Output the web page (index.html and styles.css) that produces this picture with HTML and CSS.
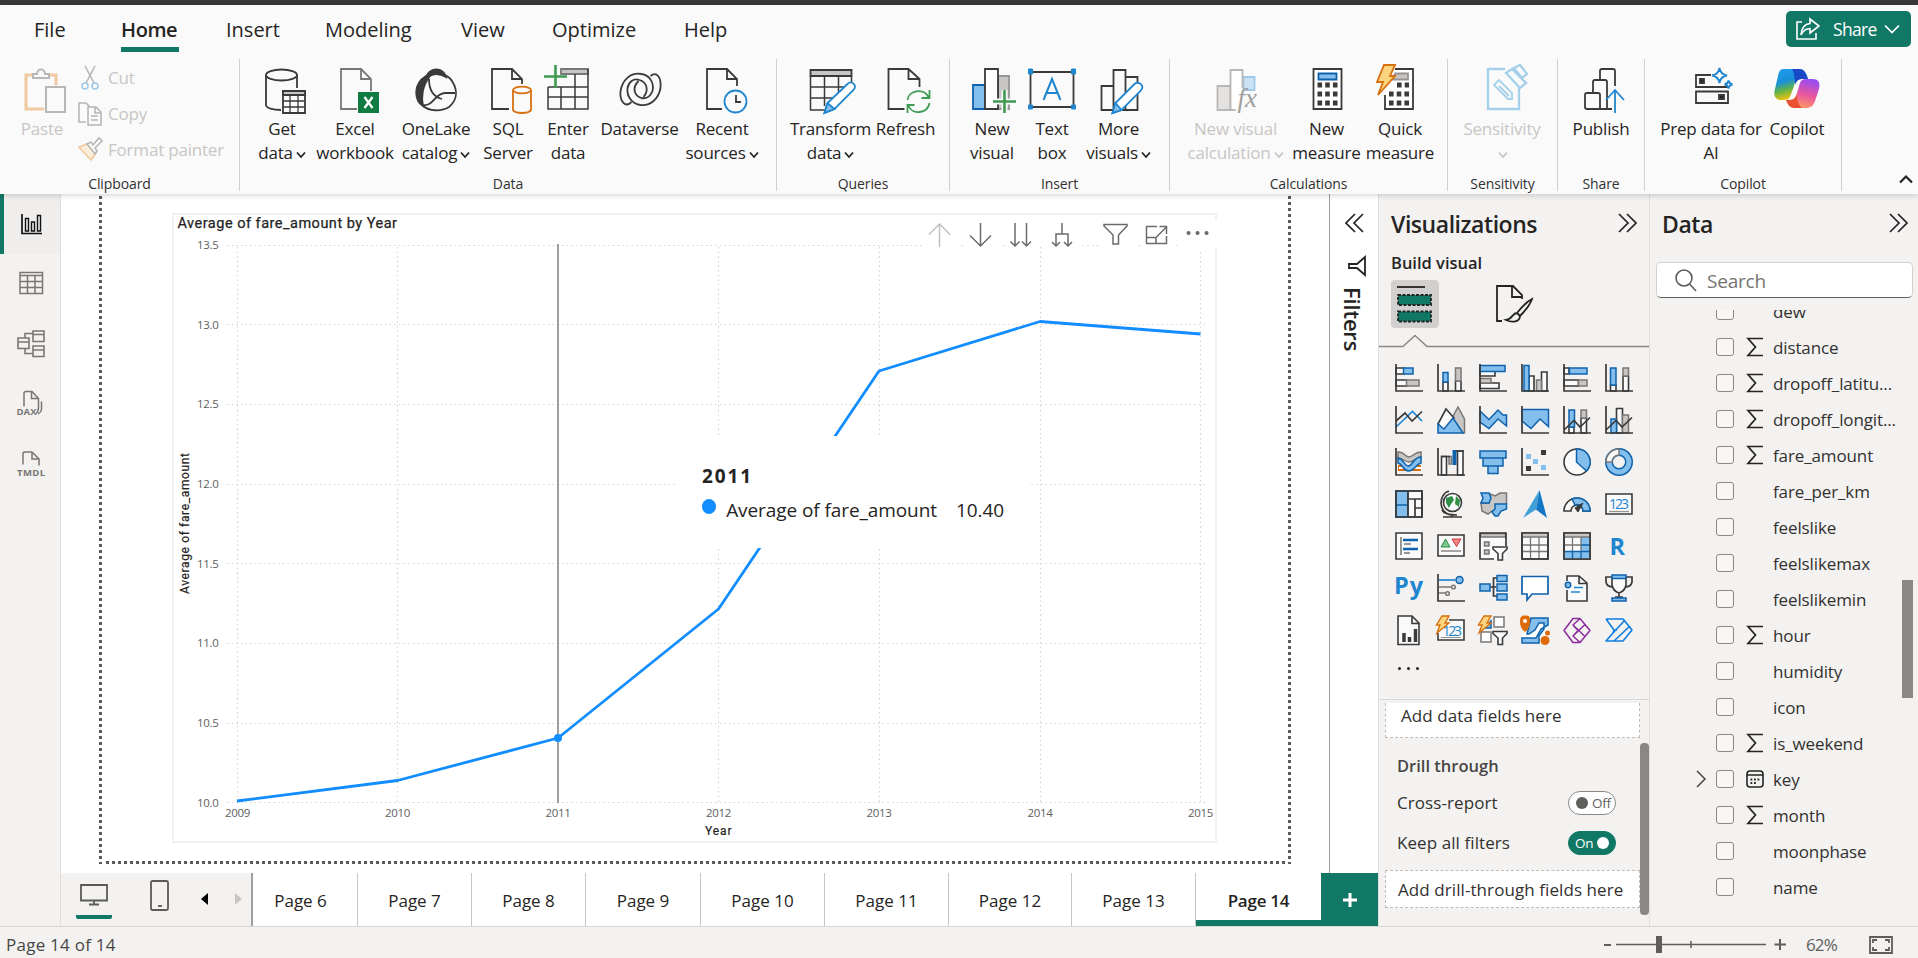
FILE: index.html
```html
<!DOCTYPE html>
<html lang="en">
<head>
<meta charset="utf-8">
<title>Report editor</title>
<link rel="stylesheet" href="styles.css">
</head>
<body>
<svg class="defs" aria-hidden="true">
  <symbol id="chev" viewBox="0 0 10 8"><path d="M1 1.500L5 6L9 1.500" fill="none" stroke="currentColor" stroke-width="1.800"/></symbol>
  <symbol id="dbl" viewBox="0 0 19 20"><path d="M1 1L10 10L1 19M9 1L18 10L9 19" fill="none" stroke="#252423" stroke-width="1.700"/></symbol>
  <symbol id="sum" viewBox="0 0 18 20"><path d="M17 1.500H2L9.500 10L2 18.500H17" fill="none" stroke="#252423" stroke-width="1.700"/></symbol>
  <linearGradient id="cpA" x1="0" y1="0" x2="0.300" y2="1"><stop offset="0" stop-color="#1f9df0"/><stop offset=".45" stop-color="#1a8fd8"/><stop offset=".7" stop-color="#5fb34a"/><stop offset="1" stop-color="#f4c20d"/></linearGradient>
  <linearGradient id="cpB" x1="0.600" y1="0" x2="0.300" y2="1"><stop offset="0" stop-color="#9a4df0"/><stop offset=".5" stop-color="#e8569d"/><stop offset="1" stop-color="#ffa25c"/></linearGradient>
</svg>

<div class="titlebar"></div>
<header class="ribbon">
  <nav class="menu">
    <span class="m-file">File</span><span class="m-home active">Home</span><span class="m-insert">Insert</span><span class="m-model">Modeling</span><span class="m-view">View</span><span class="m-opt">Optimize</span><span class="m-help">Help</span>
    <button class="share"><svg width="24" height="24" viewBox="0 0 24 24" fill="none" stroke="#fff" stroke-width="1.600"><path d="M6 5H1V22H20V16M14 6.500V2L23 9L14 16V11.500C9 11.500 7 14 5 18C5.500 11 8 7 14 6.500Z"/></svg><b>Share</b><svg width="16" height="10" viewBox="0 0 16 10" fill="none" stroke="#fff" stroke-width="1.700"><path d="M1 1.500L8 8.500L15 1.500"/></svg></button>
  </nav>
  <div class="groups">
    <section class="group g-clip off">
      <div class="tools">
        <div class="btn paste"><svg width="56" height="50" viewBox="14 64 56 50" fill="none" stroke-width="2"><path d="M32 75H26V109H44M50 75H56V85" stroke="#f0c9a0" stroke-width="3"/><path d="M33 78V74H37C37 68 45 68 45 74H49V78Z" stroke="#b9b7b5"/><path d="M46 87H65V112H46Z" stroke="#b9b7b5" fill="#fafafa"/></svg><span>Paste</span></div>
        <div class="mini">
          <span><svg width="24" height="26" viewBox="78 65 24 26" fill="none" stroke-width="1.600"><path d="M85 66L94 83M95 66L86 83" stroke="#b9b7b5"/><circle cx="85" cy="86" r="3" stroke="#9fc9e8"/><circle cx="95" cy="86" r="3" stroke="#9fc9e8"/></svg>Cut</span>
          <span><svg width="24" height="26" viewBox="78 100 24 26" fill="none" stroke="#b9b7b5" stroke-width="1.600"><path d="M86 121H79V102H86L90 106"/><path d="M88 106H96L101 111V124H88ZM95 106V112H101M91 115H98M91 119H98"/></svg>Copy</span>
          <span><svg width="24" height="26" viewBox="78 136 24 26" fill="none" stroke-width="1.600"><path d="M79 146L87 143L96 152L91 159Z" stroke="#f0c9a0" fill="#fdeed8"/><path d="M87 143L91 141L93 144L99 137L102 140L95 147L97 150L95 153Z" stroke="#b9b7b5" fill="#fafafa"/></svg>Format painter</span>
        </div>
      </div>
      <h4>Clipboard</h4>
    </section>
    <section class="group g-data">
      <div class="tools">
        <div class="btn w66"><svg width="56" height="50" viewBox="254 64 56 50" class="ic"><path d="M266 75V105C266 108 273 110 281 110M297 75V88"/><ellipse cx="281.500" cy="75" rx="15.500" ry="5.500"/><path d="M283 91H305V113H283Z" fill="#fff"/><path d="M283 91H305V95H283Z" fill="#c8c6c4"/><path d="M290 95V113M298 95V113M283 101H305M283 107H305" stroke-width="1.300"/></svg><span>Get<br>data<svg class="cv"><use href="#chev"/></svg></span></div>
        <div class="btn w80"><svg width="56" height="50" viewBox="327 64 56 50" class="ic"><path d="M357 109H341V69H361L371 79V91M361 69V79H371" stroke="#797775"/><path d="M358 92H379V113H358Z" fill="#107c41" stroke="none"/><path d="M364.500 97L372.500 108M372.500 97L364.500 108" stroke="#fff" stroke-width="2.300"/></svg><span>Excel<br>workbook</span></div>
        <div class="btn w82"><svg width="56" height="50" viewBox="409 64 56 50" class="ic"><path d="M427 77C430 67 445 67 447 77C441 73 433 73 427 77Z" fill="#3b3a39"/><path d="M427 76C414 84 415 100 424 106C422 98 423 86 431 76Z" fill="#3b3a39"/><path d="M428 78C436 71 448 73 453 81C460 92 457 101 450 107C442 112 430 111 424 106M430 79C430 90 435 97 443 99M424 105C434 107 436 93 446 93H456"/></svg><span>OneLake<br>catalog<svg class="cv"><use href="#chev"/></svg></span></div>
        <div class="btn w62"><svg width="56" height="50" viewBox="480 64 56 50" class="ic"><path d="M509 109H492V69H512L522 79V84M512 69V79H522"/><path d="M513 90V110C515 114 529 114 531 110V90" stroke="#d8700f"/><ellipse cx="522" cy="90" rx="9" ry="3.300" stroke="#d8700f"/></svg><span>SQL<br>Server</span></div>
        <div class="btn w58"><svg width="56" height="50" viewBox="540 64 56 50" class="ic"><path d="M561 69H588V74H561Z" fill="#c8c6c4" stroke="#797775"/><path d="M548 87V109H588V69M548 97H588M575 74V109M561 87V109M570 87H588M548 87H575" stroke-width="1.500"/><path d="M555.500 65V88M544 76.500H567" stroke="#3f9b54" stroke-width="2.600"/></svg><span>Enter<br>data</span></div>
        <div class="btn w85"><svg width="56" height="50" viewBox="611.500 64 56 50" class="ic"><path d="M650 76C656 71 661 77 660 88C658 99 650 106 640 105C632 104 626 97 627 88C628 82 633 78 639 80C646 82 649 90 643 97"/><path d="M631 102C625 108 619 102 620 91C622 80 630 72 641 74C649 75 654 83 652 91C650 96 646 99 641 98C634 96 631 88 638 81"/></svg><span>Dataverse</span></div>
        <div class="btn w80"><svg width="56" height="50" viewBox="694 64 56 50" class="ic"><path d="M722 109H707V69H727L737 79V86M727 69V79H737"/><circle cx="735.500" cy="101.500" r="11" stroke="#1f86cf" fill="#fafafa"/><path d="M736 95V102H741"/></svg><span>Recent<br>sources<svg class="cv"><use href="#chev"/></svg></span></div>
      </div>
      <h4>Data</h4>
    </section>
    <section class="group g-quer">
      <div class="tools">
        <div class="btn w87"><svg width="56" height="50" viewBox="802.500 64 56 50" class="ic"><path d="M810 70H851V76H810Z" fill="#c8c6c4"/><path d="M851 76V84M810 76V110H825M824 76V106M838 76V95M810 87H845M810 98H833" stroke-width="1.500"/><path d="M824 113L827 103L847 84C851 80 857 85 853 90L834 109Z" fill="#fff" stroke="#1f86cf"/><path d="M824 113L827 103L834 109Z" fill="#83beec" stroke="#1f86cf"/></svg><span>Transform<br>data<svg class="cv"><use href="#chev"/></svg></span></div>
        <div class="btn w63"><svg width="56" height="50" viewBox="877.500 64 56 50" class="ic"><path d="M904 109H888V69H908L919 79V87M908 69V79H919"/><path d="M907 100C908 90 923 88 928 97M929 90V98H921M929 103C927 114 912 115 908 106M907 113V105H914" stroke="#3f9b54"/></svg><span>Refresh</span></div>
      </div>
      <h4>Queries</h4>
    </section>
    <section class="group g-ins">
      <div class="tools">
        <div class="btn w60"><svg width="56" height="50" viewBox="964 64 56 50" class="ic"><path d="M973 85H985V109H973Z" fill="#83beec" stroke="#0f62ac"/><path d="M998 76H1009V109H998Z" fill="#c8c6c4" stroke="#979593"/><path d="M985 69H998V109H985Z" fill="#fff"/><path d="M1004.500 90V113M993 101.500H1016" stroke="#fafafa" stroke-width="6"/><path d="M1004.500 90V113M993 101.500H1016" stroke="#3f9b54" stroke-width="2.600"/></svg><span>New<br>visual</span></div>
        <div class="btn w60"><svg width="56" height="50" viewBox="1024.500 64 56 50" class="ic"><path d="M1031 72H1074V107H1031Z"/><path d="M1029 69H1033V74H1029ZM1072 69H1076V74H1072ZM1029 105H1033V109H1029ZM1072 105H1076V109H1072Z" fill="#1f86cf" stroke="#1f86cf" stroke-width="1"/><path d="M1044 100L1052.500 79L1061 100M1047 93H1058" stroke="#1f86cf" stroke-width="2"/></svg><span>Text<br>box</span></div>
        <div class="btn w73"><svg width="56" height="50" viewBox="1090.500 64 56 50" class="ic"><path d="M1101 86H1113V110H1101ZM1113 70H1125V110H1113ZM1125 77H1137V110H1125Z"/><path d="M1112 113L1115 103L1134 84C1138 81 1145 85 1140 91L1121 110Z" fill="#fff" stroke="#1f86cf"/><path d="M1112 113L1115 103L1121 110Z" fill="#83beec" stroke="#1f86cf"/></svg><span>More<br>visuals<svg class="cv"><use href="#chev"/></svg></span></div>
      </div>
      <h4>Insert</h4>
    </section>
    <section class="group g-calc">
      <div class="tools">
        <div class="btn w107 off"><svg width="56" height="50" viewBox="1206.500 64 56 50" class="ic"><path d="M1216 86H1229V110H1216Z" fill="#e3e2e1" stroke="#b9b7b5"/><path d="M1242 77H1253V90H1242Z" fill="#cbe3f5" stroke="#9fc9e8"/><path d="M1241 88V70H1229V110H1234" fill="#fff" stroke="#b9b7b5"/><text x="1236" y="107" class="fx">fx</text></svg><span>New visual<br>calculation<svg class="cv"><use href="#chev"/></svg></span></div>
        <div class="btn w75"><svg width="56" height="50" viewBox="1297.500 64 56 50" class="ic"><path d="M1312 69H1340V109H1312Z" fill="#fff"/><path d="M1317 73.500H1335V79.500H1317Z" fill="#83beec" stroke="#0f62ac"/><path d="M1316 85H1336M1316 94H1336M1316 103H1336" stroke-width="5" stroke-dasharray="4.600 3.100"/></svg><span>New<br>measure</span></div>
        <div class="btn w72"><svg width="56" height="50" viewBox="1371 64 56 50" class="ic"><path d="M1384 95V109H1412V69H1394" fill="#fff"/><path d="M1394 73.500H1407V79.500H1392Z" fill="#c8c6c4" stroke="#979593"/><path d="M1396 85H1408M1388 94H1408M1388 103H1408" stroke-width="5" stroke-dasharray="4.600 3.100"/><path d="M1383 65H1394L1389 76H1394L1377 95L1382 82H1376Z" fill="#fbd47f" stroke="#d8700f"/></svg><span>Quick<br>measure</span></div>
      </div>
      <h4>Calculations</h4>
    </section>
    <section class="group g-sens off">
      <div class="tools">
        <div class="btn w108"><svg width="56" height="50" viewBox="1473 64 56 50" class="ic ls"><path d="M1504 69H1487V109H1518V88" stroke-width="2.300"/><path d="M1493 85L1498 80L1511 93L1511 99H1507ZM1498 86L1508 96" /><path d="M1505 73L1511 69L1525 83L1519 88ZM1513 68L1519 65L1526 74L1521 78Z" stroke-width="2.300"/></svg><span>Sensitivity<br><svg class="cv"><use href="#chev"/></svg></span></div>
      </div>
      <h4>Sensitivity</h4>
    </section>
    <section class="group g-share">
      <div class="tools">
        <div class="btn w87"><svg width="56" height="50" viewBox="1573 64 56 50" class="ic"><path d="M1612 109H1587Q1585 109 1585 107V95Q1585 93 1587 93H1598Q1600 93 1600 95V109M1593 92V82Q1593 80 1595 80H1605Q1607 80 1607 82V109M1600 79V71Q1600 69 1602 69H1613Q1615 69 1615 71V86"/><path d="M1615 113V90M1606 100L1615 90L1624 100" stroke="#1f86cf"/></svg><span>Publish</span></div>
      </div>
      <h4>Share</h4>
    </section>
    <section class="group g-cop">
      <div class="tools">
        <div class="btn w108"><svg width="56" height="50" viewBox="1683 64 56 50" class="ic"><path d="M1711 75H1696V87H1728M1696 91.500H1728V103H1696Z"/><path d="M1700 79H1704V83H1700ZM1719 95H1724V99H1719Z" fill="#252423"/><path d="M1719.500 68Q1720.500 74.500 1727 75.500Q1720.500 76.500 1719.500 83Q1718.500 76.500 1712 75.500Q1718.500 74.500 1719.500 68ZM1728.500 80.500Q1729 84 1732.500 84.500Q1729 85 1728.500 88.500Q1728 85 1724.500 84.500Q1728 84 1728.500 80.500Z" fill="#fafafa" stroke="#1f86cf"/></svg><span>Prep data for<br>AI</span></div>
        <div class="btn w64"><svg width="56" height="50" viewBox="1769 64 56 50"><path d="M1783 69H1799C1804 69 1806 72 1808 79H1800C1796 79 1795 82 1794 86L1790 97C1789 99 1787 100 1784 100H1781C1775 100 1773 95 1775 89L1778 76C1779 72 1780 69 1783 69Z" fill="url(#cpA)"/><path d="M1799 69C1804 69 1806 73 1808 79H1802C1798 79 1796 82 1795 85C1795 77 1794 72 1792 69Z" fill="#1847c7"/><path d="M1812 79C1820 79 1820 84 1819 89L1815 101C1813 106 1811 108 1806 108H1795C1789 108 1788 104 1786 100H1790C1794 100 1796 97 1797 93L1800 83C1801 80 1803 79 1806 79Z" fill="url(#cpB)"/><path d="M1795 108C1789 108 1788 104 1786 100H1790C1794 100 1796 97 1797 94C1797 101 1799 106 1802 108Z" fill="#e9512f"/></svg><span>Copilot</span></div>
      </div>
      <h4>Copilot</h4>
    </section>
    <svg class="fold" width="14" height="9" viewBox="0 0 14 9"><path d="M1 7.500L7 1.500L13 7.500" fill="none" stroke="#252423" stroke-width="2.200"/></svg>
  </div>
</header>

<main>
  <aside class="rail">
    <div class="on"><svg width="30" height="30" viewBox="15 208 30 30" fill="none" stroke="#111" stroke-width="1.700"><path d="M21 213V232.500H41"/><path d="M24.500 217.500H27.500V230H24.500ZM30.500 221H33.500V230H30.500ZM36.500 214.500H39.500V230H36.500Z" stroke-width="1.400"/></svg></div>
    <div><svg width="30" height="30" viewBox="16 268 30 30" fill="none" stroke="#797775" stroke-width="1.500"><path d="M20 271.500H42.500V292.500H20ZM20 274.500H42.500M20 280.500H42.500M20 286.500H42.500M27.500 274.500V292.500M35 274.500V292.500"/></svg></div>
    <div><svg width="30" height="30" viewBox="16 328.500 30 30" fill="none" stroke="#797775" stroke-width="1.600"><path d="M33 330.500H44V341H33ZM33 334H44M33 345.500H44V356H33ZM33 349.500H44M18 337.500H29V348H18ZM18 341.500H29M25 337V333H33M25 348V353H33"/></svg></div>
    <div><svg width="32" height="30" viewBox="14 388.500 32 30" fill="none" stroke="#797775" stroke-width="1.500"><path d="M23 406V393Q23 391 25 391H31L37.500 398V407Q37.500 411 35 413M30.500 391V398H37M40.500 401V409Q40 412 37 413.500"/><text x="15.500" y="414.500" textLength="20" class="tiny">DAX</text></svg></div>
    <div><svg width="32" height="30" viewBox="15 448.500 32 30" fill="none" stroke="#797775" stroke-width="1.500"><path d="M23 464V453Q23 451.500 25 451.500H32L39 458.500V465M32 451.500V458.500H39"/><text x="17" y="475" textLength="28" class="tiny">TMDL</text></svg></div>
  </aside>

  <section class="work">
    <div class="canvas">
      <svg width="1268" height="679" viewBox="61 194 1268 679" class="chart">
        <path d="M100.500 196V864M1289.500 196V864" stroke="#5b5a58" stroke-width="3" stroke-dasharray="3 3" fill="none"/>
        <path d="M106 862.500H1288" stroke="#5b5a58" stroke-width="3" stroke-dasharray="3 3" fill="none"/>
        <rect x="173" y="214" width="1043" height="628" fill="#fff" stroke="#f3f2f1" stroke-width="2"/>
        <text x="177.500" y="228" textLength="219.500" class="ttl">Average of fare_amount by Year</text>
        <g class="grid">
          <path d="M227 245.500H1206M227 324.500H1206M227 404.500H1206M227 484.500H1206M227 563.500H1206M227 643.500H1206M227 723.500H1206M227 802.500H1206"/>
          <path d="M237.500 247V802M397.500 247V802M718.500 247V802M879.500 247V802M1040.500 247V802M1200.500 252V802"/>
        </g>
        <path d="M558 244V803" stroke="#808080" stroke-width="1.500"/>
        <g class="ax" text-anchor="end">
          <text x="218.500" y="249">13.5</text><text x="218.500" y="328.500">13.0</text><text x="218.500" y="408">12.5</text><text x="218.500" y="488">12.0</text><text x="218.500" y="567.500">11.5</text><text x="218.500" y="647">11.0</text><text x="218.500" y="727">10.5</text><text x="218.500" y="807">10.0</text>
        </g>
        <g class="ax" text-anchor="middle">
          <text x="237.500" y="817">2009</text><text x="397.500" y="817">2010</text><text x="558" y="817">2011</text><text x="718.500" y="817">2012</text><text x="879" y="817">2013</text><text x="1040" y="817">2014</text><text x="1200.500" y="817">2015</text>
        </g>
        <text x="705" y="835" textLength="26.500" class="axt">Year</text>
        <text transform="translate(189 594) rotate(-90)" textLength="141" class="axt">Average of fare_amount</text>
        <path d="M237 801L397.500 780.500L558 738L718.500 609L879 371L1040 321.500L1200.500 334" fill="none" stroke="#118dff" stroke-width="2.800" stroke-linejoin="round"/>
        <circle cx="558" cy="738" r="4" fill="#118dff"/>
        <path d="M923 221H960V248H923ZM965 221H1002V248H965ZM1005 221H1042V247H1005ZM1045 221H1083V248H1045ZM1099 221H1136V248H1099ZM1140 221H1176V248H1140ZM1180 221H1217V249H1180Z" fill="#fff"/>
        <g fill="none" stroke="#6d6b69" stroke-width="1.500">
          <path d="M939.500 247V224M929 234.500L939.500 224L950 234.500" stroke="#c3c1bf"/>
          <path d="M980.500 223V246M970 235.500L980.500 246L991 235.500"/>
          <path d="M1015 223V246M1010.500 241.500L1015 246L1019.500 241.500M1026.500 223V246M1022 241.500L1026.500 246L1031 241.500"/>
          <path d="M1062 223V234M1056 246V234H1068V246M1052 242L1056 246L1060 242M1064 242L1068 246L1072 242"/>
          <path d="M1104 224.500H1127V226L1118.500 235V244H1113V235L1104 226Z"/>
          <path d="M1157 226.500H1146.500V243.500H1166.500V236M1146.500 237.500H1156V243.500M1156.500 237L1166 227.500M1159.500 226.500H1166.500V234"/>
          <path d="M1188.500 233H1188.600M1197.500 233H1197.600M1206.500 233H1206.600" stroke-width="4" stroke-linecap="round"/>
        </g>
      </svg>
      <div class="tip"><b>2011</b><p><i></i><span>Average of fare_amount</span><span>10.40</span></p></div>
    </div>
    <div class="pages">
      <div class="modes">
        <span class="desk"><svg width="28" height="22" viewBox="0 0 28 22" fill="none" stroke="#5b5a58" stroke-width="1.800"><path d="M1 1H27V16.500H1ZM14 16.500V20M9 20.500H19"/></svg></span>
        <svg class="ph" width="19" height="31" viewBox="0 0 19 31" fill="none" stroke="#5b5a58" stroke-width="1.800"><rect x="1" y="1" width="17" height="29" rx="1.500"/><path d="M8 26H12"/></svg>
        <svg class="al" width="7" height="12" viewBox="0 0 7 12"><path d="M7 0V12L0 6Z" fill="#000"/></svg>
        <svg class="ar" width="7" height="12" viewBox="0 0 7 12"><path d="M0 0V12L7 6Z" fill="#c8c6c4"/></svg>
      </div>
      <span class="pg first">Page 6</span><span class="pg w114">Page 7</span><span class="pg w114">Page 8</span><span class="pg w115">Page 9</span><span class="pg w124">Page 10</span><span class="pg w124">Page 11</span><span class="pg w123">Page 12</span><span class="pg w124">Page 13</span><span class="pg cur">Page 14</span>
      <span class="add"><svg width="14" height="14" viewBox="0 0 14 14"><path d="M7 0V14M0 7H14" stroke="#fff" stroke-width="3"/></svg></span>
    </div>
  </section>

  <aside class="filters">
    <svg class="flip" width="19" height="20"><use href="#dbl"/></svg>
    <svg class="fun" width="18" height="20" viewBox="0 0 18 20" fill="none" stroke="#252423" stroke-width="1.800"><path d="M17 1V19L9 12H1V8H9Z"/></svg>
    <span>Filters</span>
  </aside>

  <aside class="vis">
    <div class="phead"><h2>Visualizations</h2><svg width="19" height="20"><use href="#dbl"/></svg></div>
    <h3>Build visual</h3>
    <div class="modesel">
      <span class="sel"><svg width="36" height="37" viewBox="0 0 36 37"><path d="M0 1H28" stroke="#252423" stroke-width="1.800"/><path d="M1 9H34V19H1ZM1 25.500H34V35.500H1Z" fill="#117865" stroke="#252423" stroke-width="1.800" stroke-dasharray="3 1.500"/></svg></span>
      <svg width="38" height="38" viewBox="0 0 38 38" fill="none" stroke="#252423" stroke-width="1.800"><path d="M6 36H1V1H17L26 10V14M16 1V12H26"/><path d="M36 14C30 17 25 23 21 28L24 31C29 26 34 20 36 14ZM21 28C16 28 17 34 10 35C16 38 24 37 24 31Z"/></svg>
    </div>
    <svg class="notch" width="270" height="14" viewBox="0 0 270 14"><path d="M0 12.500H24L36 1.500L48 12.500H270" fill="none" stroke="#8a8886" stroke-width="1.500"/></svg>
    <div class="icons">
      <svg><path class="w" d="M1 4H9V10H1ZM1 16H12V22H1Z"/><path class="b" d="M8.500 4H18V10H8.500Z"/><path class="g" d="M11.500 16H24V22H11.500Z"/><path class="k" d="M1 0V27H28"/></svg>
      <svg><path class="w" d="M6 18H11V27H6ZM18.500 17H24V27H18.500Z"/><path class="b" d="M6 8.500H11V18H6Z"/><path class="g" d="M18.500 4H24V17H18.500Z"/><path class="k" d="M1 0V27H28"/></svg>
      <svg><path class="w" d="M1 7H16V12H1ZM1 19H20V24.500H1Z"/><path class="b" d="M1 1.500H26V7.500H1Z"/><path class="g" d="M1 14.500H12V19H1Z"/><path class="k" d="M1 0V27H28"/></svg>
      <svg><path class="w" d="M8 12H13V27H8ZM20.500 8H26V27H20.500Z"/><path class="b" d="M3 1.500H8V27H3Z"/><path class="g" d="M15.500 16H20.500V27H15.500Z"/><path class="k" d="M1 0V27H28"/></svg>
      <svg><path class="w" d="M1 4H6V10H1ZM1 16H15.500V22H1Z"/><path class="b" d="M6.500 4H24V10H6.500Z"/><path class="g" d="M15.500 16H24V22H15.500Z"/><path class="k" d="M1 0V27H28"/></svg>
      <svg><path class="w" d="M5.500 21H11V27H5.500ZM18 12H23.500V27H18Z"/><path class="b" d="M5.500 4H11V21H5.500Z"/><path class="g" d="M18 4H23.500V12H18Z"/><path class="k" d="M1 0V27H28"/></svg>

      <svg><path class="bl" d="M1 21L17.500 5.500L27 15"/><path class="k" d="M1 15L10 7L17 15L27 5.500"/><path class="k" d="M1 0V27H28"/></svg>
      <svg><path class="g" d="M21 1L14 14L26 27H27.500V13Z"/><path class="w" d="M1 18L9 3L17 12L7 25L1 18Z"/><path class="b" d="M1 18L7 23L16 12L26 27H1Z"/></svg>
      <svg><path class="b" d="M1 5L10 13.500L19 4L24 9H27.500V20L19 13L10 22.500L1 16Z"/><path class="k" d="M1 0V27H28"/></svg>
      <svg><path class="b" d="M1 3.500H27.500V20.500L19 13L10 22.500L1 15Z"/><path class="k" d="M1 0V27H28"/></svg>
      <svg><path class="w" d="M6 21H11V27H6ZM18 12H23.500V27H18Z"/><path class="b" d="M6 4H11.500V21H6Z"/><path class="g" d="M18 4H23.500V12H18Z"/><path class="k" d="M1 24L11 14.500L17 21L27 11.500M1 0V27H28"/></svg>
      <svg><path class="w" d="M11.500 2.500H17.500V27H11.500Z"/><path class="b" d="M6 13H11.500V27H6Z"/><path class="g" d="M17.500 9H23.500V27H17.500Z"/><path class="k" d="M1 24L11 14.500L17 21L27 11.500M1 0V27H28"/></svg>

      <svg><path d="M3 20H26" stroke="#d8700f" stroke-width="6"/><path d="M4 20H9M19 20H26" stroke="#fff" stroke-width="2"/><path class="g" d="M3 4C9 3 10 9 14 9C18 9 19 4 26 4V10C20 10 19 14 14 14C9 14 8 10 3 10Z"/><path class="b" d="M3 10C9 11 9 18 13.500 18C18 18 18 9 26 9V15C21 16 19 23 13.500 23C8 23 8 16 3 15Z"/><path class="k" d="M1 0V27H28"/></svg>
      <svg><path class="w" d="M4.500 8.500H9.500V27H4.500ZM20.500 3H26V27H20.500Z"/><path class="g" d="M12 8.500H14.500V16H12Z"/><path d="M17.500 2V17" stroke="#0f62ac" stroke-width="4"/><path class="k" d="M1 0V27H28M4 8.500H13M19 3H27"/></svg>
      <svg><path class="b" d="M1 3H27V10H1ZM4 10H24V18H4ZM9 18H19V25.500H9Z"/></svg>
      <svg><path d="M20 2H25V7H20ZM5 18H10V23H5Z" fill="#3b3a39"/><path d="M5 6H10V11H5ZM12 11H17V16H12ZM20 17H25V22H20Z" fill="#83beec"/><path class="k" d="M1 0V27H28"/></svg>
      <svg><circle class="w" cx="14" cy="14" r="13"/><path class="b" d="M13.500 1A13 13 0 0 1 23.500 23L13.500 14Z"/></svg>
      <svg><circle cx="14" cy="14" r="10" fill="none" stroke="#0f62ac" stroke-width="8"/><circle cx="14" cy="14" r="10" fill="none" stroke="#83beec" stroke-width="5"/><path class="wg" d="M1 14A13 13 0 0 1 14 1V7A7 7 0 0 0 7 14Z"/></svg>

      <svg><path class="w" d="M1 1H27V27H1Z"/><path class="b" d="M1 1H13V27H1ZM1 15H13"/><path class="k" d="M1 1H27V27H1ZM13 1V27M13 9H27M20 9V27M20 18H27"/></svg>
      <svg><circle class="w" cx="15.500" cy="12.500" r="9"/><path d="M9 8L15 6L17 10L14 14L12 18L9 13ZM19 6L23 10L22 17L18 14Z" fill="#2f8f46"/><path class="k" d="M12 1C1 4 1 24 15 25M20 25C10 25 6 22 5 20M15 25V27M6 27H25"/></svg>
      <svg><path class="g" d="M11 4L16 6L21 3H27.500V14L24 18L21 20L13 21L9 24L3 21L2 13H10Z"/><path class="b" d="M2 3H10L12 8L10 13H2L4 8ZM16 14H27.500V19L22 21L19 26H16L13 22L16 19Z"/></svg>
      <svg><path d="M18.500 0L2 28L15 19.500Z" fill="#3f9fd6"/><path d="M18.500 0L26 28L15 19.500Z" fill="#1277c4"/></svg>
      <svg><path class="w" d="M1 21A13 13 0 0 1 27 21H20A6 6 0 0 0 8 21Z"/><path class="b" d="M9 9A13 13 0 0 1 27 21H20A6 6 0 0 0 12 15Z"/><path d="M20 13L12 18L15 22Z" fill="#3b3a39" stroke="#3b3a39"/></svg>
      <svg><path class="w" d="M1 4H27V24H1Z"/><path d="M4 21.500H24" stroke="#979593" stroke-width="1.300"/><text x="4" y="19" textLength="20" class="num">123</text></svg>

      <svg><path class="w" d="M1 1H27V27H1Z"/><path d="M6 5V23M9 12H16M9 21H15" stroke="#797775" stroke-width="1.500"/><path d="M8 8H23M8 17H23" stroke="#0f62ac" stroke-width="2.500"/></svg>
      <svg><path class="w" d="M1 3H27V24H1Z"/><path d="M8.500 7L13 15H4Z" fill="#7cc68d" stroke="#2f8f46"/><path d="M15 7H24L19.500 14.500Z" fill="#f08a8a" stroke="#d13438"/><path d="M4 19H24" stroke="#797775" stroke-width="1.300"/></svg>
      <svg><path d="M1 1H27V27H1Z" fill="#fafafa"/><path class="g" d="M1.500 1.500H26.500V5H1.500ZM5.500 10H10V14H5.500ZM5.500 18H10V22H5.500Z"/><path class="k" d="M15 27H1V1H27V14"/><path class="w" d="M14 15H28V17L23.500 21.500V28H19V21.500L14 17Z"/></svg>
      <svg><path class="w" d="M1 1H27V27H1Z"/><path d="M1 1H27V5H1Z" fill="#c8c6c4"/><path class="kg" d="M1 5H27M9.500 5V27M18 5V27M1 13H27M1 19.500H27"/><path class="k" d="M1 1H27V27H1Z"/></svg>
      <svg><path class="w" d="M1 1H27V27H1Z"/><path d="M18 5H27V27H1V19.500H18Z" fill="#83beec"/><path d="M1 1H27V5H1Z" fill="#c8c6c4"/><path d="M1 5H27M9.500 5V19M18 5V19M1 13H18" class="kg"/><path d="M18 13H27M18 19.500V27M9.500 19.500V27M1 19.500H27" stroke="#0f62ac" stroke-width="1.300"/><path class="k" d="M1 1H27V27H1Z"/></svg>
      <svg><text x="4.500" y="23" class="ltr">R</text></svg>

      <svg><text x="-1" y="20" textLength="29" class="ltr">Py</text></svg>
      <svg><path d="M2 6H18" stroke="#1f86cf" stroke-width="1.700"/><path d="M2 13H15M2 19H9" stroke="#797775" stroke-width="1.500"/><circle class="b" cx="22.500" cy="6" r="3.500"/><circle cx="16.500" cy="13" r="1.800" class="gl"/><circle cx="10.500" cy="19.500" r="1.800" class="gl"/><path class="k" d="M1 0V27H28"/></svg>
      <svg><path class="k" d="M11 13H17M18 4H14.500V22H18"/><path class="b" d="M1 10H11V17H1ZM18 1.500H28V7.500H18ZM18 10H28V17H18ZM18 20H28V26H18Z"/></svg>
      <svg><path d="M1 2.500H27V20H11L6 26V20H1Z" fill="#fff" stroke="#0f62ac" stroke-width="1.700"/></svg>
      <svg><path class="w" d="M4 7V2H16L24 9V27H4V16M16 2V9.500H24"/><circle class="b" cx="5" cy="11" r="2.700"/><path d="M11 13.500H20M8 18H17" stroke="#1f86cf" stroke-width="1.500"/></svg>
      <svg><path class="k" d="M7 3H1V8Q2 13 8 13M21 3H27V8Q26 13 20 13"/><path class="w" d="M7 4H21V11Q20 17 14 19Q8 17 7 11ZM14 19V23M10 23H18"/><path class="b" d="M7 1H21V4.500H7ZM7 24H21V27H7Z"/></svg>

      <svg><path class="w" d="M3 0H17L24 7V28.500H3ZM17 0V7.500H24"/><path d="M9 17V26M14.500 21V26M20.500 13V26" stroke="#3b3a39" stroke-width="3.500"/></svg>
      <svg><path class="w" d="M12 4H27V24H1V17"/><path d="M4 21.500H24" stroke="#979593"/><text x="5.500" y="19.500" textLength="19.500" class="num">123</text><path class="o" d="M5 0H12L8 7H12L0 17L3 9H-0.500Z"/></svg>
      <svg><path class="gl" d="M15 1H25V11H15ZM2 16H12V26H2Z"/><path class="b" d="M8 9L12 5V12H6Z"/><path class="o" d="M5 0H12L8 7H12L0 17L3 9H-0.500Z"/><path class="w" d="M14 15.500H28V17.500L23.500 22V28.500H19V22L14 17.500Z"/></svg>
      <svg><path d="M1 26V19L7 16L12 15L17 11L20 6H27V16L19 26Z" fill="#fff"/><path class="b" d="M10 2H27V9L20 13L15 22H1V27H18V20L23 13V7H18L14 14L8 18H6Z"/><path d="M4-.5C9-.5 9 1 9 6Q9 12 4 16Q-1 12-1 6C-1 1 0-.5 4-.5Z" fill="#dd6b0a"/><circle cx="4" cy="5" r="2" fill="#fff"/><circle cx="24" cy="24.500" r="4.500" fill="#dd6b0a"/><circle cx="26.500" cy="17" r="2.500" fill="#dd6b0a"/></svg>
      <svg><path d="M10 2.500H17L27 14.500L17 26.500H10L1 14.500ZM17 2.500L10 9L22 20.500M10 9L15 14.500L10 20L17 26.500M22 8.500L10 20" fill="none" stroke="#8c2b9c" stroke-width="1.500" stroke-linejoin="round"/></svg>
      <svg><path d="M1 3H18L27 14L18 25H1L8 17L20 4M1 3L9 14L8 17M9 14H12M9 25L25 10" fill="none" stroke="#0f7de0" stroke-width="1.600" stroke-linejoin="round"/></svg>
    </div>
    <div class="more"><i></i><i></i><i></i></div>
    <div class="wells">
      <div class="well top">Add data fields here</div>
      <h3>Drill through</h3>
      <div class="opt"><span>Cross-report</span><span class="tg"><i></i>Off</span></div>
      <div class="opt"><span>Keep all filters</span><span class="tg yes">On<i></i></span></div>
      <div class="well">Add drill-through fields here</div>
      <div class="sb"></div>
    </div>
  </aside>

  <aside class="data">
    <div class="phead"><h2>Data</h2><svg width="19" height="20"><use href="#dbl"/></svg></div>
    <div class="search"><svg width="22" height="23" viewBox="0 0 22 23" fill="none" stroke="#605e5c" stroke-width="1.600"><circle cx="9" cy="9" r="8"/><path d="M14.500 15L21 22"/></svg><span>Search</span></div>
    <div class="list">
      <div><i></i><u></u><span>dew</span></div>
      <div><i></i><svg><use href="#sum"/></svg><span>distance</span></div>
      <div><i></i><svg><use href="#sum"/></svg><span>dropoff_latitu...</span></div>
      <div><i></i><svg><use href="#sum"/></svg><span>dropoff_longit...</span></div>
      <div><i></i><svg><use href="#sum"/></svg><span>fare_amount</span></div>
      <div><i></i><u></u><span>fare_per_km</span></div>
      <div><i></i><u></u><span>feelslike</span></div>
      <div><i></i><u></u><span>feelslikemax</span></div>
      <div><i></i><u></u><span>feelslikemin</span></div>
      <div><i></i><svg><use href="#sum"/></svg><span>hour</span></div>
      <div><i></i><u></u><span>humidity</span></div>
      <div><i></i><u></u><span>icon</span></div>
      <div><i></i><svg><use href="#sum"/></svg><span>is_weekend</span></div>
      <div class="key"><svg class="exp" viewBox="0 0 10 18"><path d="M1 1L9 9L1 17" fill="none" stroke="#484644" stroke-width="1.500"/></svg><i></i><svg viewBox="0 0 18 20"><rect x="1" y="2" width="16" height="16" rx="3" fill="none" stroke="#252423" stroke-width="1.600"/><path d="M1 6H17" stroke="#252423" stroke-width="1.500"/><path d="M4.500 10.500H14M4.500 14H11" stroke="#252423" stroke-width="1.800" stroke-dasharray="1.800 1.700"/></svg><span>key</span></div>
      <div><i></i><svg><use href="#sum"/></svg><span>month</span></div>
      <div><i></i><u></u><span>moonphase</span></div>
      <div><i></i><u></u><span>name</span></div>
      <b class="thumb"></b>
    </div>
  </aside>
</main>

<footer><span>Page 14 of 14</span>
  <div class="zoom"><svg width="182" height="20" viewBox="1604 935 182 20" fill="none" stroke="#605e5c"><path d="M1604 945H1611M1774.500 944.500H1786M1780 939V950" stroke-width="2"/><path d="M1616 944.500H1766M1691 941V948" stroke-width="1.500"/><path d="M1659 936V953" stroke-width="6"/></svg><span>62%</span><svg width="24" height="18" viewBox="0 0 24 18" fill="none" stroke="#605e5c" stroke-width="1.800"><path d="M1 1H23V17H1ZM4 7V4H8M16 4H20V7M20 11V14H16M8 14H4V11"/></svg></div>
</footer>
</body>
</html>
```

FILE: styles.css
```css
* { box-sizing: border-box; }
body { margin: 0; width: 1918px; height: 958px; display: flex; flex-direction: column; overflow: hidden; font: 17px/24px "Open Sans", "Noto Sans", sans-serif; letter-spacing: -0.2px; color: #252423; background: #f3f2f1; }
h2, h3, h4, p { margin: 0; font-weight: 400; }
svg { display: block; overflow: visible; }
.defs { position: absolute; width: 0; height: 0; }

.titlebar { height: 5px; background: #3b3a39; flex: none; }
.ribbon { height: 189px; flex: none; background: #fafafa; position: relative; z-index: 2; box-shadow: 0 1px 6px rgba(0,0,0,.2); }
.menu { height: 47px; display: flex; align-items: center; padding: 0 7px 0 34px; font-size: 20px; letter-spacing: 0; }
.menu span { height: 47px; line-height: 49px; white-space: nowrap; }
.m-file { width: 87px; } .m-home { width: 58px; margin-right: 47px; } .m-insert { width: 99px; } .m-model { width: 136px; } .m-view { width: 91px; } .m-opt { width: 132px; }
.menu .active { font-weight: 600; border-bottom: 5px solid #117865; letter-spacing: -0.400px; }
.share { margin-left: auto; width: 125px; height: 36px; margin-top: 1px; border: 0; border-radius: 5px; background: #117865; color: #fff; display: flex; align-items: center; padding: 0 11px 0 10px; font: 17.500px "Open Sans"; letter-spacing: -0.700px; }
.share b { font-weight: 400; margin: 0 auto 0 13px; }

.groups { display: flex; height: 142px; padding-top: 7px; position: relative; }
.group { height: 132px; border-right: 1px solid #d2d0ce; display: flex; flex-direction: column; justify-content: space-between; }
.group h4 { text-align: center; font-size: 14px; line-height: 15px; letter-spacing: -0.100px; color: #323130; }
.tools { display: flex; padding-top: 5px; }
.g-clip { width: 240px; } .g-data { width: 537px; } .g-quer { width: 173px; } .g-ins { width: 220px; } .g-calc { width: 278px; } .g-sens { width: 110px; } .g-share { width: 87px; } .g-cop { width: 197px; }
.g-data .tools { padding-left: 9px; } .g-quer .tools { padding-left: 10px; } .g-ins .tools, .g-calc .tools { padding-left: 12px; } .g-cop .tools { padding-left: 12px; }
.btn { display: flex; flex-direction: column; align-items: center; text-align: center; white-space: nowrap; }
.btn > span { margin-top: 3px; }
.cv { display: inline-block; width: 10px; height: 8px; margin-left: 3px; }
.ic { fill: none; stroke: #3b3a39; stroke-width: 1.800; }
.ls { stroke: #a5d0ea; }
.off { color: #c8c6c4; }
.fx { font: italic 27px "Liberation Serif", serif; fill: #a19f9d; stroke: none; letter-spacing: 0; }
.w58 { width: 58px; } .w60 { width: 60px; } .w62 { width: 62px; } .w63 { width: 63px; } .w64 { width: 64px; } .w66 { width: 66px; } .w72 { width: 72px; } .w73 { width: 73px; } .w75 { width: 75px; } .w80 { width: 80px; } .w82 { width: 82px; } .w85 { width: 85px; } .w87 { width: 87px; } .w107 { width: 107px; } .w108 { width: 108px; }
.paste { width: 56px; margin-left: 14px; }
.mini { margin-left: 8px; display: flex; flex-direction: column; gap: 10px; padding-top: 1px; }
.mini span { display: flex; gap: 6px; height: 26px; align-items: center; white-space: nowrap; }
.fold { position: absolute; left: 1899px; top: 123px; }

main { flex: none; height: 732px; display: flex; }
.rail { width: 61px; border-right: 1px solid #e1dfdd; }
.rail div { height: 60px; display: flex; align-items: center; justify-content: center; border-left: 4px solid transparent; padding-right: 3px; }
.rail .on { border-color: #117865; background: #efeeed; }
.tiny { font: 700 9.500px "Open Sans"; fill: #797775; stroke: none; letter-spacing: 0; }

.work { width: 1268px; }
.canvas { height: 679px; background: #fff; position: relative; }
.ttl { font: 400 14.500px Roboto, sans-serif; fill: #252423; stroke: #252423; stroke-width: .25px; letter-spacing: 0; }
.axt { font: 400 12px Roboto, sans-serif; fill: #252423; stroke: #252423; stroke-width: .2px; letter-spacing: 0; }
.ax { font-size: 11.500px; fill: #605e5c; letter-spacing: -0.300px; }
.grid path { stroke: #d2d1d0; stroke-width: 1.200; stroke-dasharray: 1.400 3.250; fill: none; }
.tip { position: absolute; left: 617px; top: 242px; width: 350px; height: 112px; background: #fff; padding: 28px 24px; font-size: 19px; letter-spacing: -0.080px; }
.tip b { font-size: 19px; letter-spacing: 1.900px; display: block; }
.tip p { display: flex; margin-top: 10px; white-space: nowrap; align-items: center; }
.tip i { width: 15px; height: 15px; border-radius: 50%; background: #118dff; margin: -7px 10px 0 0; }
.tip span + span { margin-left: 19px; }

.pages { display: flex; height: 53px; width: 1317px; background: #fff; position: relative; z-index: 1; }
.modes { flex: none; width: 192px; background: #f3f2f1; border-right: 2px solid #a19f9d; display: flex; align-items: flex-start; }
.desk { width: 36px; height: 46px; margin-left: 15px; padding: 11px 4px 0; border-bottom: 4px solid #117865; border-radius: 0 0 2px 2px; }
.ph { margin: 7px 0 0 38px; } .al { margin: 20px 0 0 32px; } .ar { margin: 20px 0 0 27px; }
.pg { flex: none; border-right: 1px solid #c8c6c4; text-align: center; line-height: 56px; white-space: nowrap; letter-spacing: 0; }
.pg.first { width: 105px; padding-right: 9px; }
.w114 { width: 114px; } .w115 { width: 115px; } .w124 { width: 124px; } .w123 { width: 123px; }
.pg.cur { width: 125px; font-weight: 600; border-right: 0; border-bottom: 6px solid #117865; letter-spacing: -0.250px; }
.add { flex: 1; background: #117865; display: flex; align-items: center; justify-content: center; }

.filters { width: 50px; background: #fff; border-left: 1px solid #a19f9d; border-right: 1px solid #e1dfdd; display: flex; flex-direction: column; align-items: flex-start; padding: 19px 0 0 14px; }
.flip { transform: scaleX(-1); margin-left: 1px; }
.fun { margin: 23px 0 0 4px; }
.filters span { writing-mode: vertical-rl; width: 24px; font-size: 22px; font-weight: 600; line-height: 24px; margin: 11px 0 0 -3px; letter-spacing: -0.200px; }

.phead { display: flex; justify-content: space-between; align-items: center; height: 58px; }
.phead h2 { font-size: 23px; font-weight: 600; letter-spacing: -0.450px; margin-top: 1px; }
.vis { width: 271px; border-right: 1px solid #e1dfdd; }
.vis .phead { padding: 0 12px; }
.vis h3 { font-weight: 600; font-size: 16.500px; letter-spacing: 0; padding-left: 12px; line-height: 22px; }
.modesel { display: flex; gap: 57px; align-items: center; margin: 6px 0 0 12px; height: 48px; }
.sel { width: 48px; height: 48px; background: #d2d0ce; border-radius: 4px; padding: 6px; }
.notch { margin-top: 6px; }
.icons { display: grid; grid-template-columns: repeat(6, 28px); gap: 14px; padding: 16px 0 0 16px; }
.icons svg { width: 28px; height: 28px; }
.w { fill: #fafafa; stroke: #3b3a39; stroke-width: 1.600; }
.wg { fill: #fafafa; stroke: #797775; stroke-width: 1.500; }
.b { fill: #83beec; stroke: #0f62ac; stroke-width: 1.500; }
.g { fill: #c8c6c4; stroke: #797775; stroke-width: 1.500; }
.k { fill: none; stroke: #3b3a39; stroke-width: 1.700; }
.kg { fill: none; stroke: #797775; stroke-width: 1.300; }
.bl { fill: none; stroke: #1f86cf; stroke-width: 1.700; }
.gl { fill: #fff; stroke: #797775; stroke-width: 1.500; }
.o { fill: #fbd47f; stroke: #d8700f; stroke-width: 1.400; }
.num { font: 14px "Open Sans"; fill: #1f86cf; letter-spacing: 0; }
.ltr { font: 700 23.500px "Open Sans"; fill: #1f86cf; letter-spacing: 0; }
.more { display: flex; gap: 6px; padding: 23px 0 0 19px; height: 55px; }
.more i { width: 3px; height: 3px; border-radius: 50%; background: #252423; }
.wells { position: relative; border-top: 1px solid #d9d7d5; padding: 3px 0 0 6px; height: 226px; color: #323130; letter-spacing: 0.080px; }
.well { width: 255px; height: 38px; margin-top: 7px; border: 1px dashed #bebbb8; background: #fff; line-height: 38px; padding-left: 12px; white-space: nowrap; }
.well.top { margin: 0; height: 35px; border-top: 0; line-height: 26px; padding-left: 15px; }
.wells h3 { color: #484644; padding-left: 12px; height: 45px; line-height: 56px; }
.opt { display: flex; justify-content: space-between; align-items: center; height: 40px; padding: 0 33px 0 12px; }
.tg { width: 48px; height: 24px; border: 1px solid #8a8886; border-radius: 12px; background: #fff; display: flex; align-items: center; gap: 4px; padding-left: 7px; font-size: 13.500px; letter-spacing: -0.300px; color: #605e5c; }
.tg i { width: 12px; height: 12px; border-radius: 50%; background: #605e5c; flex: none; }
.tg.yes { background: #117865; border-color: #117865; color: #fff; padding-left: 6px; }
.yes i { background: #fff; }
.sb { position: absolute; left: 261px; top: 43px; width: 9px; height: 172px; border-radius: 4px; background: #8a8886; }

.data { width: 268px; }
.data .phead { padding: 0 10px 0 12px; }
.search { margin: 10px 0 0 6px; width: 257px; height: 36px; background: #fff; border: 1px solid #d2d0ce; border-bottom: 1.500px solid #605e5c; border-radius: 5px; display: flex; align-items: center; gap: 10px; padding-left: 18px; font-size: 19px; color: #757371; }
.search span { padding-top: 2px; }
.list { height: 616px; margin-top: 12px; overflow: hidden; position: relative; color: #323130; letter-spacing: -0.120px; }
.list div { height: 36px; display: flex; align-items: center; padding-left: 66px; white-space: nowrap; }
.list div:first-child { margin-top: -17px; }
.list span { padding-top: 1px; }
.list i { width: 18px; height: 18px; border: 1px solid #8a8886; border-radius: 3px; background: #f8f7f6; flex: none; margin-right: 12px; }
.list svg, .list u { width: 18px; height: 20px; margin-right: 9px; flex: none; }
.list .key { padding-left: 46px; }
.list .exp { width: 10px; height: 18px; margin-right: 10px; }
.thumb { position: absolute; left: 252px; top: 270px; width: 11px; height: 118px; background: #8a8886; }

footer { flex: none; height: 32px; border-top: 1px solid #d9d7d5; display: flex; justify-content: space-between; align-items: center; padding: 4px 25px 0 6px; color: #484644; letter-spacing: 0.250px; }
footer > span { padding-top: 1px; }
.zoom { display: flex; align-items: center; }
.zoom span { margin: 0 29px 0 20px; width: 34px; color: #605e5c; letter-spacing: -0.900px; }
```
